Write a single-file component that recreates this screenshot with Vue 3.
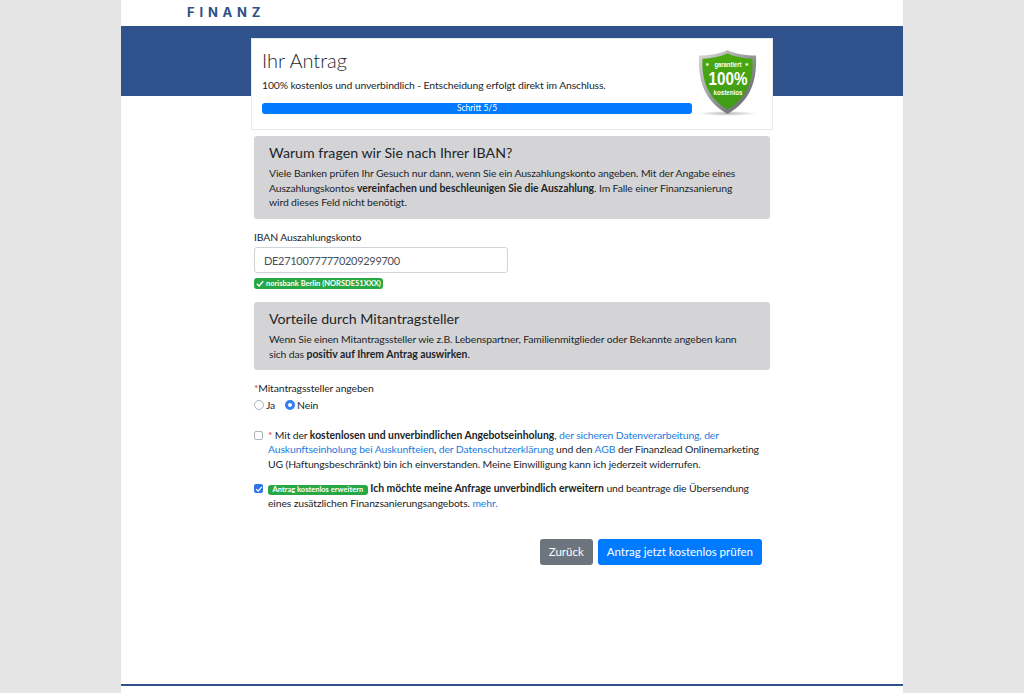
<script setup>
const title = 'Ihr Antrag'
</script>

<template>
  <div class="page">
    <header class="logo-row"><span class="logo">FINANZ</span></header>
    <div class="band"></div>
    <section class="head-card">
      <div class="head-main">
        <h1>{{ title }}</h1>
        <p class="lead">100% kostenlos und unverbindlich - Entscheidung erfolgt direkt im Anschluss.</p>
        <div class="progress">Schritt 5/5</div>
      </div>
      <svg class="shield" viewBox="0 0 60 70" width="60" height="70">
        <defs>
          <linearGradient id="rim" x1="0" y1="0" x2="1" y2="1">
            <stop offset="0" stop-color="#dcdcdc" />
            <stop offset="0.5" stop-color="#97999b" />
            <stop offset="1" stop-color="#55585a" />
          </linearGradient>
          <linearGradient id="fill" x1="0" y1="0" x2="0" y2="1">
            <stop offset="0" stop-color="#4aa80f" />
            <stop offset="1" stop-color="#3f9a18" />
          </linearGradient>
          <radialGradient id="floor" cx="0.5" cy="0.5" r="0.5">
            <stop offset="0" stop-color="#777" stop-opacity="0.55" />
            <stop offset="1" stop-color="#888" stop-opacity="0" />
          </radialGradient>
        </defs>
        <ellipse cx="29" cy="64.500" rx="30" ry="2.500" fill="url(#floor)" />
        <path d="M29.500 1 C37 5 48 6.500 58 6.500 C59 30 54 51 29.500 65 C5 51 0 30 1 6.500 C11 6.500 22 5 29.500 1Z" fill="url(#rim)" />
        <path d="M29.500 4.500 C37 8 46 9.500 54.500 9.800 C55.500 30 50 48.500 29.500 60.500 C9 48.500 3.500 30 4.500 9.800 C13 9.500 22 8 29.500 4.500Z" fill="url(#fill)" />
        <text x="30" y="17.500" text-anchor="middle" class="s1" textLength="27" lengthAdjust="spacingAndGlyphs">garantiert</text>
        <text x="7" y="17" class="s0">★</text>
        <text x="46.500" y="17" class="s0">★</text>
        <text x="30" y="36" text-anchor="middle" class="s2" textLength="39" lengthAdjust="spacingAndGlyphs">100%</text>
        <text x="30" y="46" text-anchor="middle" class="s3" textLength="29" lengthAdjust="spacingAndGlyphs">kostenlos</text>
      </svg>
    </section>

    <main class="content">
      <section class="note first">
        <h2>Warum fragen wir Sie nach Ihrer IBAN?</h2>
        <p>Viele Banken prüfen Ihr Gesuch nur dann, wenn Sie ein Auszahlungskonto angeben. Mit der Angabe eines Auszahlungskontos <b>vereinfachen und beschleunigen Sie die Auszahlung</b>. Im Falle einer Finanzsanierung wird dieses Feld nicht benötigt.</p>
      </section>

      <label class="field-label" for="iban">IBAN Auszahlungskonto</label>
      <input id="iban" class="input" value="DE27100777770209299700" />
      <div class="badge bank">
        <svg viewBox="0 0 10 8" width="8" height="7"><path d="M1 4.200 3.800 7 9 1.200" fill="none" stroke="#fff" stroke-width="1.800" /></svg>
        <span>norisbank Berlin (NORSDE51XXX)</span>
      </div>

      <section class="note second">
        <h2>Vorteile durch Mitantragsteller</h2>
        <p>Wenn Sie einen Mitantragssteller wie z.B. Lebenspartner, Familienmitglieder oder Bekannte angeben kann sich das <b>positiv auf Ihrem Antrag auswirken</b>.</p>
      </section>

      <div class="co-label"><i>*</i>Mitantragssteller angeben</div>
      <div class="radios">
        <span class="opt"><span class="radio"></span>Ja</span>
        <span class="opt"><span class="radio on"></span>Nein</span>
      </div>

      <div class="check-row one">
        <span class="box"></span>
        <p><i class="req">*</i> Mit der <b>kostenlosen und unverbindlichen Angebotseinholung</b>, <a>der sicheren Datenverarbeitung, der Auskunftseinholung bei Auskunfteien</a>, <a>der Datenschutzerklärung</a> und den <a>AGB</a> der Finanzlead Onlinemarketing UG (Haftungsbeschränkt) bin ich einverstanden. Meine Einwilligung kann ich jederzeit widerrufen.</p>
      </div>

      <div class="check-row two">
        <span class="box on">
          <svg viewBox="0 0 10 10" width="8" height="8"><path d="M1.500 5.200 4 7.700 8.500 2.300" fill="none" stroke="#fff" stroke-width="1.600" /></svg>
        </span>
        <p><span class="badge inline">Antrag kostenlos erweitern</span> <b>Ich möchte meine Anfrage unverbindlich erweitern</b> und beantrage die Übersendung eines zusätzlichen Finanzsanierungsangebots. <a>mehr.</a></p>
      </div>

      <div class="actions">
        <button class="btn grey">Zurück</button>
        <button class="btn blue">Antrag jetzt kostenlos prüfen</button>
      </div>
    </main>
    <footer class="foot"></footer>
  </div>
</template>

<style>
html, body { margin: 0; background: #e5e5e5; }
</style>

<style scoped>
.page {
  width: 782px;
  height: 693px;
  margin: 0 auto;
  background: #fff;
  position: relative;
  overflow: hidden;
  font-family: Lato, "Open Sans", sans-serif;
  color: #212529;
  display: flex;
  flex-direction: column;
}
.logo-row { height: 26px; padding-left: 66px; box-sizing: border-box; }
.logo { display: block; font: 700 13px/24px Inter, "Liberation Sans", sans-serif; letter-spacing: 4.800px; color: #2e5088; }
.band { height: 70px; background: #2f528c; flex: none; }
.head-card {
  flex: none;
  box-sizing: border-box;
  width: 522px;
  height: 92px;
  margin: -58px 0 0 130px;
  padding: 9px 12px 0 10px;
  background: #fff;
  border: 1px solid #e9e9e9;
  display: flex;
  position: relative;
}
.head-main { width: 430px; flex: none; }
h1 { margin: 0; font-size: 20px; line-height: 25px; font-weight: 300; color: #24282c; }
.lead { margin: 4px 0 0; font-size: 10.400px; line-height: 16px; letter-spacing: -0.120px; }
.progress {
  margin-top: 10px;
  height: 11px;
  border-radius: 3px;
  background: #007bff;
  color: #fff;
  font-size: 8.500px;
  line-height: 11px;
  text-align: center;
}
.shield { margin: 1px 0 0 6px; flex: none; }
.s0 { font: 700 5px "DejaVu Sans", sans-serif; fill: #fff; }
.s1 { font: 700 7.500px "Liberation Sans", sans-serif; fill: #fff; }
.s2 { font: 700 18px "Liberation Sans", sans-serif; fill: #fff; }
.s3 { font: 700 8px "Liberation Sans", sans-serif; fill: #fff; }
.content { width: 516px; margin: 6px 0 0 133px; font-size: 10.400px; line-height: 16px; letter-spacing: -0.120px; }
.content b { letter-spacing: 0; }
.note { background: #d4d4d6; border-radius: 3px; box-sizing: border-box; padding: 8px 15px; }
.note.first { height: 83px; padding-right: 22px; }
.note.second { height: 68px; margin-top: 13px; }
h2 { margin: 0 0 4px; font-size: 14.200px; line-height: 18px; font-weight: 400; letter-spacing: 0; }
.note p { margin: 0; line-height: 14.600px; }
.field-label { display: block; margin-top: 10px; line-height: 16px; }
.input {
  display: block;
  box-sizing: border-box;
  width: 254px;
  height: 26px;
  margin-top: 2px;
  padding: 0 9px;
  border: 1px solid #ced4da;
  border-radius: 3px;
  color: #495057;
  font: 11px Lato, sans-serif;
  letter-spacing: -0.300px;
}
.badge {
  display: inline-flex;
  align-items: center;
  gap: 2px;
  box-sizing: border-box;
  background: #28a745;
  color: #fff;
  border-radius: 3px;
  font-size: 7.500px;
  font-weight: 700;
  line-height: 10px;
  letter-spacing: 0;
}
.bank { height: 11px; padding: 0 2px; margin-top: 5px; vertical-align: top; }
.co-label { margin-top: 10px; line-height: 16px; }
.co-label i, .req { color: #dc3545; font-style: normal; }
.radios { display: flex; gap: 10px; margin-top: 1px; line-height: 16px; }
.opt { display: flex; align-items: center; gap: 2px; }
.radio { box-sizing: border-box; width: 10px; height: 10px; border-radius: 50%; border: 1px solid #adb5bd; background: #fff; }
.radio.on { border: 3.500px solid #2f80f0; }
.check-row { display: flex; gap: 5px; }
.check-row.one { margin-top: 14.700px; }
.check-row.two { margin-top: 10px; }
.check-row p { margin: 0; width: 502px; line-height: 14.600px; }
.box {
  box-sizing: border-box;
  flex: none;
  width: 9px;
  height: 9px;
  margin-top: 3px;
  border: 1px solid #adb5bd;
  border-radius: 2px;
  background: #fff;
  display: flex;
  align-items: center;
  justify-content: center;
}
.box.on { background: #2f74e8; border: none; }
.inline { padding: 0 4.500px; height: 10px; vertical-align: baseline; }
a { color: #1a7be0; }
.actions { display: flex; justify-content: flex-end; gap: 5px; margin-top: 28px; padding-right: 8px; }
.btn {
  height: 26px;
  border: 0;
  border-radius: 3px;
  color: #fff;
  font: 11.500px Lato, sans-serif;
  padding: 0 9px;
}
.grey { background: #6c757d; }
.blue { background: #007bff; }
.foot { position: absolute; left: 0; right: 0; top: 684px; height: 2px; background: #2f528c; }
</style>
